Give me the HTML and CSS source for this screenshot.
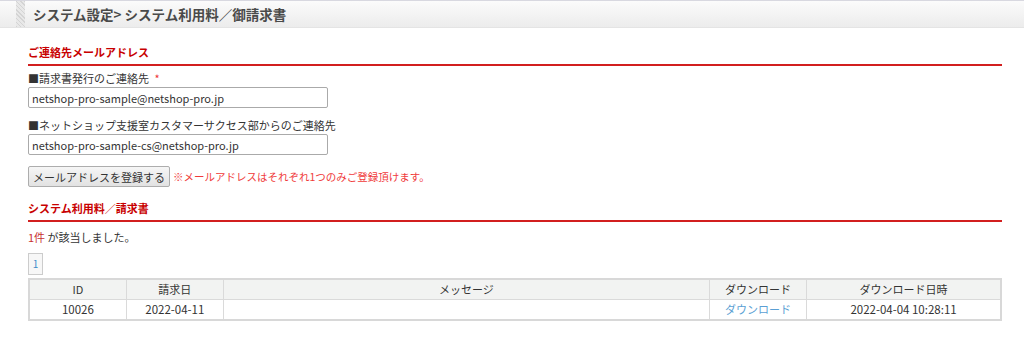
FILE: index.html
```html
<!DOCTYPE html>
<html lang="ja">
  <head>
    <meta charset="UTF-8" />
    <title>システム利用料／御請求書</title>
    <link rel="stylesheet" href="styles.css">
  </head>
  <body>
    <div class="page-head">
      <span class="head-mark"></span>
      <h1>システム設定&gt; システム利用料／御請求書</h1>
    </div>

    <div class="content">
      <!-- Contact addresses -->
      <h2 class="section-title first">ご連絡先メールアドレス</h2>
      <div class="field">
        <label>■請求書発行のご連絡先 <span class="req">*</span></label>
        <input type="text" value="netshop-pro-sample@netshop-pro.jp" />
      </div>
      <div class="field">
        <label>■ネットショップ支援室カスタマーサクセス部からのご連絡先</label>
        <input type="text" value="netshop-pro-sample-cs@netshop-pro.jp" />
      </div>
      <div class="actions">
        <button>メールアドレスを登録する</button>
        <span class="note">※メールアドレスはそれぞれ1つのみご登録頂けます。</span>
      </div>

      <!-- Invoices -->
      <h2 class="section-title">システム利用料／請求書</h2>
      <p class="count"><span class="num">1件</span> が該当しました。</p>
      <div class="pager"><span class="page">1</span></div>
      <table class="list">
        <tr>
          <th class="c-id">ID</th>
          <th class="c-date">請求日</th>
          <th class="c-msg">メッセージ</th>
          <th class="c-dl">ダウンロード</th>
          <th class="c-time">ダウンロード日時</th>
        </tr>
        <tr>
          <td>10026</td>
          <td>2022-04-11</td>
          <td></td>
          <td><a href="#">ダウンロード</a></td>
          <td>2022-04-04 10:28:11</td>
        </tr>
      </table>
    </div>
  </body>
</html>
```

FILE: styles.css
```css
body {
  margin: 0;
  font-family: "Noto Sans CJK JP", "Noto Sans", sans-serif;
  font-size: 11px;
  color: #333;
  background: #fff;
}
.page-head {
  display: flex;
  align-items: stretch;
  height: 26px;
  border-top: 1px solid #d8d8e0;
  border-bottom: 1px solid #e4e4e4;
  background: linear-gradient(#fbfbfb, #ececec);
}
.head-mark {
  width: 9px;
  margin-left: 16px;
  background: repeating-linear-gradient(45deg, #d4d4d4 0 1px, #e8e8e8 1px 3px);
}
.page-head h1 {
  margin: 0 0 0 8px;
  font-size: 13.5px;
  line-height: 26px;
  color: #4a4a4a;
}
.content {
  padding: 0 22px 0 28px;
}
.section-title {
  margin: 12px 0 0;
  padding-bottom: 3px;
  font-size: 11px;
  line-height: 18px;
  color: #c80000;
  border-bottom: 2px solid #d21f1f;
}
.section-title.first {
  margin-top: 15px;
}
.field {
  margin-top: 4px;
}
.field + .field {
  margin-top: 9px;
}
.field label {
  display: block;
  line-height: 16px;
}
.req {
  margin-left: 3px;
  color: #e33;
}
.field input {
  display: block;
  box-sizing: border-box;
  width: 300px;
  height: 21px;
  margin-top: 1px;
  padding: 0 3px;
  border: 1px solid #aaa;
  border-radius: 2px;
  font: inherit;
  font-size: 11px;
  color: #333;
}
.actions {
  margin-top: 11px;
  display: flex;
  align-items: center;
  gap: 3px;
}
.actions button {
  height: 21px;
  padding: 0 4px;
  border: 1px solid #adadad;
  border-radius: 2px;
  background: linear-gradient(#f6f6f6, #e2e2e2);
  font: inherit;
  font-size: 11px;
  color: #333;
}
.note {
  color: #f03a3a;
  font-size: 10.5px;
}
.count {
  margin: 7px 0 0;
  line-height: 16px;
}
.num {
  color: #c83232;
}
.pager {
  display: flex;
  margin-top: 8px;
}
.page {
  width: 13px;
  height: 20px;
  line-height: 20px;
  text-align: center;
  border: 1px solid #ccc;
  background: #f7f7f7;
  color: #3c8dc8;
  font-size: 10px;
}
.list {
  width: 100%;
  margin-top: 3px;
  border-collapse: collapse;
  border: 2px solid #d8d8d8;
  font-size: 11.5px;
}
.list th,
.list td {
  height: 19px;
  padding: 0;
  line-height: 19px;
  border: 1px solid #dadada;
  text-align: center;
  font-weight: normal;
}
.list th {
  background: #f2f3f2;
  font-size: 11px;
}
.c-id,
.c-date,
.c-dl {
  width: 10%;
}
.c-msg {
  width: 50%;
}
.c-time {
  width: 20%;
}
.list a {
  color: #5b9fd4;
  text-decoration: none;
  font-size: 11px;
}
```
